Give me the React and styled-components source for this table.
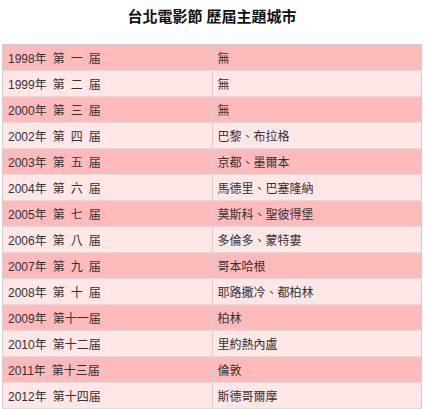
import React from 'react';
import styled, { createGlobalStyle } from 'styled-components';

const GlobalStyle = createGlobalStyle`
     body {
          margin: 0;
          background: #fff;
          font-family: 'Liberation Sans', 'Noto Sans CJK TC', sans-serif;
     }
`;

const Page = styled.div`
     width: 425px;
     padding: 7px 3px 0 2px;
     box-sizing: border-box;
`;

const Title = styled.h3`
     margin: 0 0 17px;
     text-align: center;
     font-size: 15px;
     line-height: 20px;
     font-weight: bold;
     color: #111;
`;

const Table = styled.table`
     width: 420px;
     border-collapse: collapse;
     border: 1px solid #cfcfcf;
     table-layout: fixed;
`;

const Row = styled.tr`
     background: ${(p) => (p.$odd ? '#ffbbbb' : '#ffe7e7')};
`;

const Cell = styled.td`
     height: 25px;
     padding: 0 0 0 5px;
     border-bottom: 1px solid #e8d8d8;
     border-right: 1px solid #dcc8c8;
     font-size: 12px;
     word-spacing: 2.7px;
     color: #333;
     white-space: pre;
     vertical-align: middle;
`;

const rows = [
     ['1998年 第 一 届', '無'],
     ['1999年 第 二 届', '無'],
     ['2000年 第 三 届', '無'],
     ['2002年 第 四 届', '巴黎、布拉格'],
     ['2003年 第 五 届', '京都、墨爾本'],
     ['2004年 第 六 届', '馬德里、巴塞隆納'],
     ['2005年 第 七 届', '莫斯科、聖彼得堡'],
     ['2006年 第 八 届', '多倫多、蒙特婁'],
     ['2007年 第 九 届', '哥本哈根'],
     ['2008年 第 十 届', '耶路撒冷、都柏林'],
     ['2009年 第十一届', '柏林'],
     ['2010年 第十二届', '里約熱內盧'],
     ['2011年 第十三届', '倫敦'],
     ['2012年 第十四届', '斯德哥爾摩'],
];

const App = () => {
     return (
          <Page>
               <GlobalStyle />
               <Title>台北電影節 歷屆主題城市</Title>
               <Table>
                    <tbody>
                         {rows.map((row, index) => (
                              <Row key={index} $odd={index % 2 === 0}>
                                   <Cell>{row[0]}</Cell>
                                   <Cell>{row[1]}</Cell>
                              </Row>
                         ))}
                    </tbody>
               </Table>
          </Page>
     );
};

export default App;
